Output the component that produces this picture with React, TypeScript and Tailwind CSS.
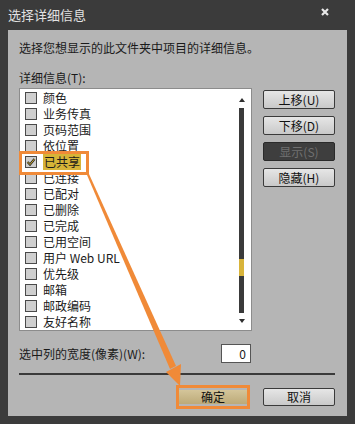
const items = [
  '颜色',
  '业务传真',
  '页码范围',
  '依位置',
  '已共享',
  '已连接',
  '已配对',
  '已删除',
  '已完成',
  '已用空间',
  '用户 Web URL',
  '优先级',
  '邮箱',
  '邮政编码',
  '友好名称',
];

const font = { fontFamily: '"Noto Sans CJK SC", "Liberation Sans", sans-serif' };

function Checkbox({ checked }: { checked?: boolean }) {
  return (
    <span className="w-[12px] h-[12px] shrink-0 border border-[#4a4a4a] bg-[#cfcfcf] flex items-center justify-center">
      {checked && (
        <svg width="10" height="10" viewBox="0 0 10 10">
          <path d="M1.5 5 L4 7.5 L8.5 2" fill="none" stroke="#222" strokeWidth="2.2" />
          <path d="M1.5 5 L4 7.5 L8.5 2" fill="none" stroke="#e0b830" strokeWidth="0.9" />
        </svg>
      )}
    </span>
  );
}

function SideButton({ label, disabled }: { label: string; disabled?: boolean }) {
  return (
    <button
      className={
        disabled
          ? 'h-[19px] w-[72px] rounded-[2px] border border-[#2a2a2a] bg-[#3e3e3e] text-[12px] leading-none text-[#707070]'
          : 'h-[19px] w-[72px] rounded-[2px] border border-[#3a3a3a] bg-gradient-to-b from-[#e6e6e6] to-[#c9c9c9] text-[12px] leading-none text-[#111]'
      }
    >
      {label}
    </button>
  );
}

export default function App() {
  return (
    <div className="relative w-[355px] h-[424px] bg-[#3b3b3b] flex flex-col" style={font}>
      {/* Title bar */}
      <div className="h-[30px] px-2 flex items-center justify-between">
        <span className="text-[13px] text-[#e2e2e2]">选择详细信息</span>
        <svg width="8" height="8" viewBox="0 0 8 8" className="mr-[18px] mb-[6px]">
          <path d="M1 1 L7 7 M7 1 L1 7" stroke="#e8e8e8" strokeWidth="2.2" />
        </svg>
      </div>

      {/* Panel */}
      <div className="mx-2 h-[386px] bg-[#b5b5b5] pl-[11px] pr-[12px] pt-[10px] flex flex-col text-[12px] text-[#1a1a1a]">
        <div className="h-[16px] leading-[16px]">选择您想显示的此文件夹中项目的详细信息。</div>
        <div className="h-[16px] leading-[16px] mt-[14px]">详细信息(T):</div>

        <div className="mt-[2px] flex gap-[11px]">
          {/* List box */}
          <div className="w-[233px] h-[243px] bg-white border border-[#8c8c8c] flex">
            <div className="flex-1 pt-[1px] pl-[5px] flex flex-col">
              {items.map((it, i) => (
                <div key={it} className="h-[16px] flex items-center gap-[6px]">
                  <Checkbox checked={i === 4} />
                  <span
                    className={
                      i === 4
                        ? 'bg-[#d6b438] px-[1px] h-[16px] leading-[16px] text-[12px]'
                        : 'leading-[16px] text-[12px]'
                    }
                  >
                    {it}
                  </span>
                </div>
              ))}
            </div>
            {/* Scrollbar */}
            <div className="w-[12px] pr-[7px] flex flex-col items-center pt-[9px] pb-[6px]">
              <svg width="6" height="4" viewBox="0 0 6 4">
                <path d="M0 4 L3 0 L6 4 Z" fill="#2e2e2e" />
              </svg>
              <div className="mt-[6px] w-[5px] h-[205px] bg-[#3a3a3a] flex flex-col">
                <div className="h-[151px]" />
                <div className="h-[17px] bg-[#d8b43a]" />
              </div>
              <svg width="6" height="4" viewBox="0 0 6 4" className="mt-[6px]">
                <path d="M0 0 L6 0 L3 4 Z" fill="#2e2e2e" />
              </svg>
            </div>
          </div>

          {/* Buttons */}
          <div className="pt-[2px] flex flex-col gap-[7px]">
            <SideButton label="上移(U)" />
            <SideButton label="下移(D)" />
            <SideButton label="显示(S)" disabled />
            <SideButton label="隐藏(H)" />
          </div>
        </div>

        {/* Width row */}
        <div className="mt-[13px] h-[19px] flex items-center">
          <span className="w-[202px]">选中列的宽度(像素)(W):</span>
          <div className="w-[30px] h-[19px] bg-white border border-[#555] flex items-center justify-end pr-[4px]">0</div>
        </div>

        <div className="mt-[10px] h-[2px] bg-[#3a3a3a]" />

        {/* Bottom buttons */}
        <div className="mt-[10px] flex justify-end items-center gap-[13px]">
          <div className="border-[3px] border-[#f08a38]">
            <button className="h-[14px] w-[68px] bg-gradient-to-b from-[#d4c59a] to-[#bcaa78] text-[12px] leading-none text-[#111]">
              确定
            </button>
          </div>
          <button className="h-[18px] w-[72px] rounded-[2px] border border-[#3a3a3a] bg-gradient-to-b from-[#e6e6e6] to-[#c9c9c9] text-[12px] leading-none text-[#111]">
            取消
          </button>
        </div>
      </div>

      {/* Annotation: highlight around checked row */}
      <div className="absolute left-[19px] top-[151px] w-[70px] h-[24px] border-[3px] border-[#f08a38]" />

      {/* Annotation: arrow */}
      <svg className="absolute left-0 top-0 pointer-events-none" width="355" height="424" viewBox="0 0 355 424">
        <polygon points="87,175 89,174 176,366 170,369" fill="#f08a38" />
        <polygon points="166,372 181,364 180,386" fill="#f08a38" />
      </svg>
    </div>
  );
}
